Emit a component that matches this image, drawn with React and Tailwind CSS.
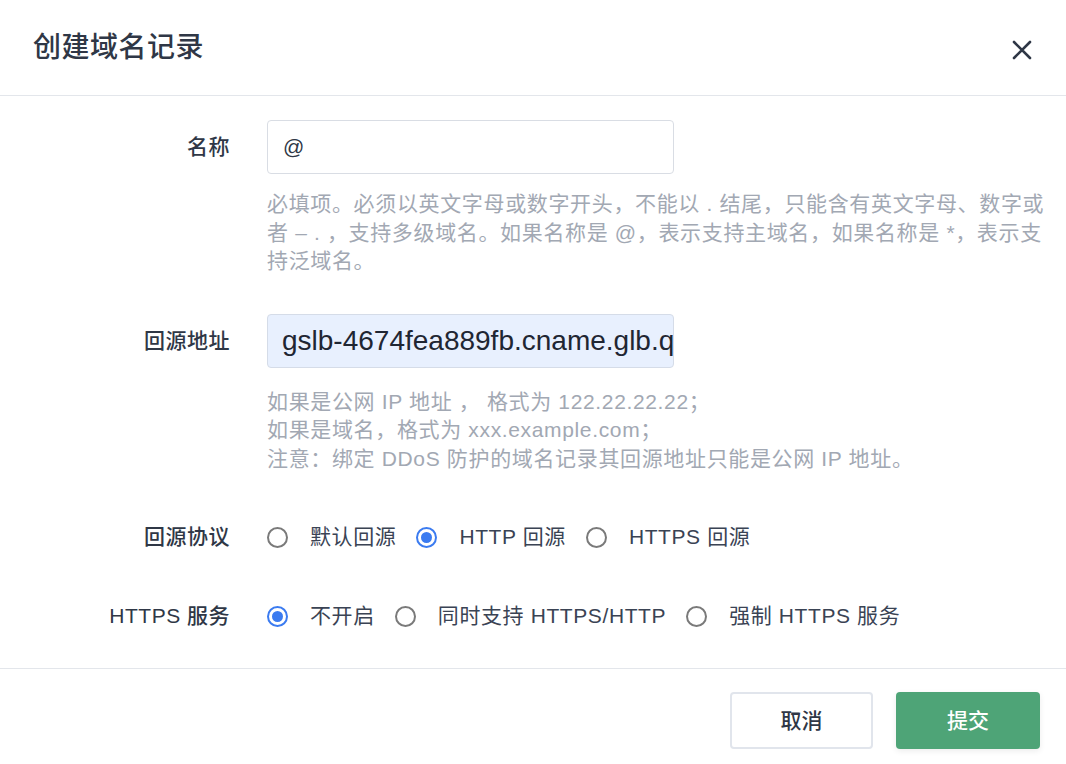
import React from "react";

const FONT = { fontFamily: '"Liberation Sans", "Noto Sans CJK SC", sans-serif' };

function Radio({ checked, label, last }) {
  return (
    <div className={"flex items-center " + (last ? "" : "mr-[20px]")}>
      {checked ? (
        <span className="w-[21px] h-[21px] rounded-full border-2 border-[#3b7bf0] flex items-center justify-center">
          <span className="w-[11px] h-[11px] rounded-full bg-[#3b7bf0]" />
        </span>
      ) : (
        <span className="w-[21px] h-[21px] rounded-full border-2 border-[#7a7a7a]" />
      )}
      <span className="ml-[22px] text-[21px] leading-[28px] tracking-[0.6px] text-[#3a4354] whitespace-nowrap">{label}</span>
    </div>
  );
}

function Label({ children, h = "h-[54px]" }) {
  return (
    <div className={"w-[230px] shrink-0 flex items-center justify-end text-[21px] font-medium tracking-[0.5px] text-[#2f3746] whitespace-nowrap " + h}>
      {children}
    </div>
  );
}

export default function App() {
  return (
    <div className="w-[1066px] h-[764px] bg-white flex flex-col" style={FONT}>
      <div className="h-[96px] px-[33px] flex items-center justify-between border-b border-[#e3e6eb]">
        <div className="text-[28px] text-[#2f3746] font-medium tracking-[0.5px]">创建域名记录</div>
        <svg width="22" height="22" viewBox="0 0 22 22" className="mt-[4px]">
          <path d="M3 3L19 19M19 3L3 19" stroke="#2f3746" strokeWidth="2.6" strokeLinecap="round" />
        </svg>
      </div>

      <div className="flex-1 pt-[24px] pr-[10px]">
        <div className="flex gap-[37px]">
          <Label>名称</Label>
          <div className="flex flex-col">
            <div className="w-[407px] h-[54px] border border-[#d9dde4] rounded-[4px] flex items-center px-[15px] text-[21px] text-[#2f3746]">
              @
            </div>
            <div className="mt-[16px] text-[21px] leading-[28.5px] tracking-[0.65px] text-[#a2a8b3] whitespace-nowrap">
              <div>必填项。必须以英文字母或数字开头，不能以 . 结尾，只能含有英文字母、数字或</div>
              <div>者 – . ，支持多级域名。如果名称是 @，表示支持主域名，如果名称是 *，表示支</div>
              <div>持泛域名。</div>
            </div>
          </div>
        </div>

        <div className="flex gap-[37px] mt-[38px]">
          <Label>回源地址</Label>
          <div className="flex flex-col">
            <div className="w-[407px] h-[54px] border border-[#d5dce8] bg-[#e8f0fe] rounded-[4px] flex items-center px-[14px] text-[28px] text-[#1f2633] overflow-hidden whitespace-nowrap">
              gslb-4674fea889fb.cname.glb.q
            </div>
            <div className="mt-[20px] text-[21px] leading-[28.5px] tracking-[0.65px] text-[#a2a8b3] whitespace-nowrap">
              <div>如果是公网 IP 地址 ， 格式为 122.22.22.22；</div>
              <div>如果是域名，格式为 xxx.example.com；</div>
              <div>注意：绑定 DDoS 防护的域名记录其回源地址只能是公网 IP 地址。</div>
            </div>
          </div>
        </div>

        <div className="flex gap-[37px] mt-[44px] items-center">
          <Label h="h-[40px]">回源协议</Label>
          <div className="flex items-center h-[40px]">
            <Radio label="默认回源" />
            <Radio checked label="HTTP 回源" />
            <Radio label="HTTPS 回源" last />
          </div>
        </div>

        <div className="flex gap-[37px] mt-[39px] items-center">
          <Label h="h-[40px]">HTTPS 服务</Label>
          <div className="flex items-center h-[40px]">
            <Radio checked label="不开启" />
            <Radio label="同时支持 HTTPS/HTTP" />
            <Radio label="强制 HTTPS 服务" last />
          </div>
        </div>
      </div>

      <div className="h-[96px] border-t border-[#e3e6eb] flex items-start justify-end gap-[23px] pt-[23px] pr-[26px]">
        <button className="w-[143px] h-[57px] rounded-[4px] border-2 border-[#e1e5ec] bg-white text-[21px] font-medium text-[#2f3746]">
          取消
        </button>
        <button className="w-[144px] h-[57px] rounded-[4px] bg-[#4ea477] text-[21px] font-medium text-white shadow-[0_2px_6px_rgba(0,0,0,0.08)]">
          提交
        </button>
      </div>
    </div>
  );
}
